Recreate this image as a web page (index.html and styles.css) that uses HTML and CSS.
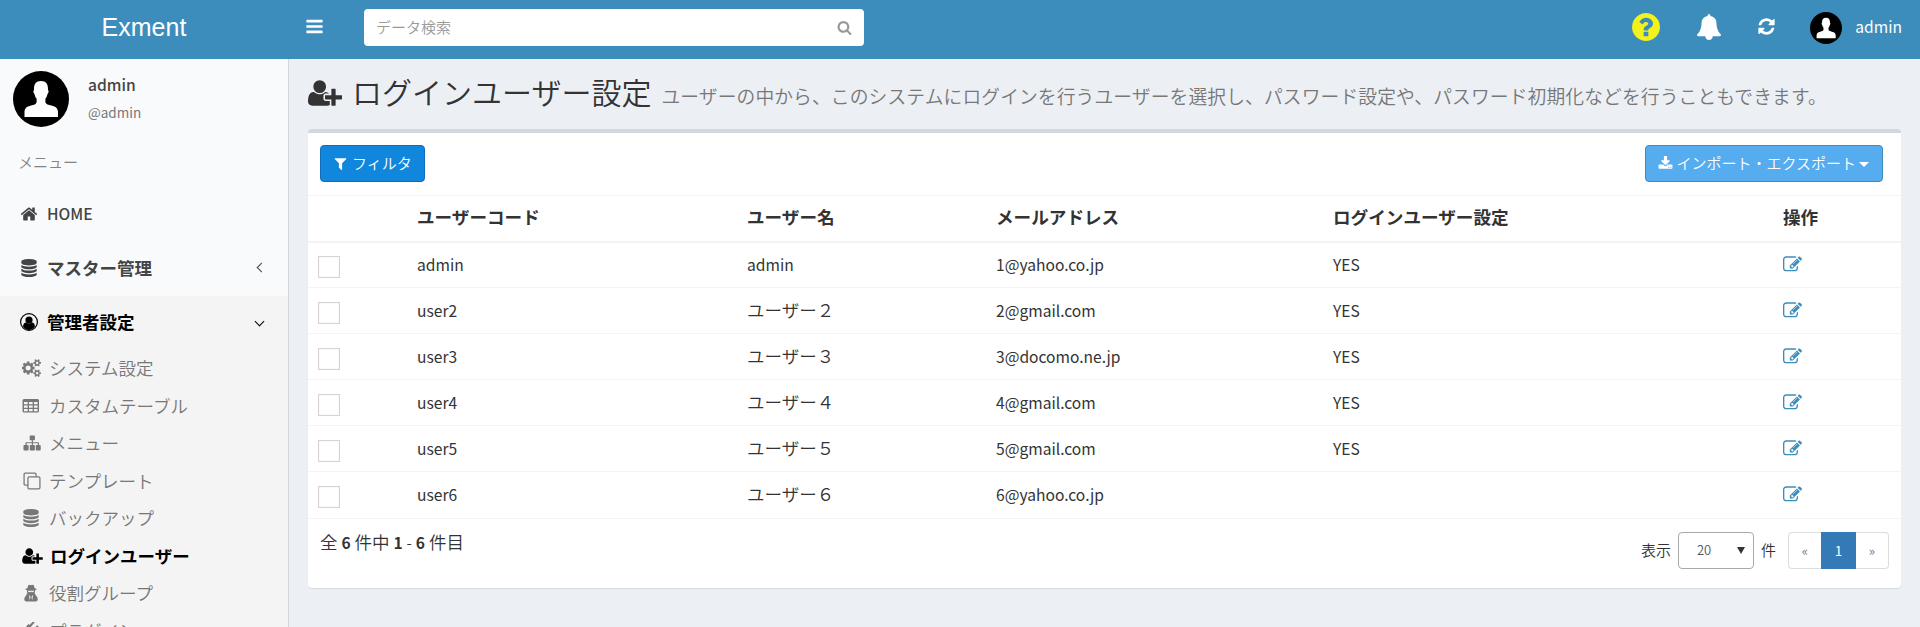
FILE: index.html
```html
<!DOCTYPE html>
<html lang="ja">
<head>
<meta charset="utf-8">
<title>ログインユーザー設定 | Exment</title>
<link rel="stylesheet" href="styles.css">
</head>
<body>
<svg class="sprite" aria-hidden="true">
  <symbol id="bars" viewBox="0 0 1792 1792"><path d="M1664 1344v128q0 26-19 45t-45 19h-1408q-26 0-45-19t-19-45v-128q0-26 19-45t45-19h1408q26 0 45 19t19 45zm0-512v128q0 26-19 45t-45 19h-1408q-26 0-45-19t-19-45v-128q0-26 19-45t45-19h1408q26 0 45 19t19 45zm0-512v128q0 26-19 45t-45 19h-1408q-26 0-45-19t-19-45v-128q0-26 19-45t45-19h1408q26 0 45 19t19 45z"/></symbol>
  <symbol id="search" viewBox="0 0 1792 1792"><path d="M1216 832q0-185-131.500-316.500t-316.500-131.500-316.500 131.500-131.500 316.500 131.500 316.500 316.500 131.500 316.500-131.500 131.500-316.500zm512 832q0 52-38 90t-90 38q-54 0-90-38l-343-342q-179 124-399 124-143 0-273.500-55.500t-225-150-150-225-55.500-273.500 55.500-273.500 150-225 225-150 273.500-55.500 273.500 55.500 225 150 150 225 55.500 273.500q0 220-124 399l343 343q37 37 37 90z"/></symbol>
  <symbol id="filter" viewBox="0 0 1792 1792"><path d="M1595 295q17 41-14 70l-493 493v742q0 42-39 59-13 5-25 5-27 0-45-19l-256-256q-19-19-19-45v-486l-493-493q-31-29-14-70 17-39 59-39h1280q42 0 59 39z"/></symbol>
  <symbol id="home" viewBox="0 0 1792 1792"><path d="M1472 992v480q0 26-19 45t-45 19h-384v-384h-256v384h-384q-26 0-45-19t-19-45v-480q0-1 .5-3t.5-3l575-474 575 474q1 2 1 6zm223-69l-62 74q-8 9-21 11h-3q-13 0-21-7l-692-577-692 577q-12 8-24 7-13-2-21-11l-62-74q-8-10-7-23.500t11-21.500l719-599q32-26 76-26t76 26l244 204v-195q0-14 9-23t23-9h192q14 0 23 9t9 23v408l219 182q10 8 11 21.500t-7 23.500z"/></symbol>
  <symbol id="database" viewBox="0 0 1792 1792"><path d="M896 768q237 0 443-43t325-127v170q0 69-103 128t-280 93.500-385 34.500-385-34.500-280-93.500-103-128v-170q119 84 325 127t443 43zm0 768q237 0 443-43t325-127v170q0 69-103 128t-280 93.500-385 34.500-385-34.500-280-93.500-103-128v-170q119 84 325 127t443 43zm0-384q237 0 443-43t325-127v170q0 69-103 128t-280 93.500-385 34.500-385-34.500-280-93.500-103-128v-170q119 84 325 127t443 43zm0-1152q208 0 385 34.500t280 93.500 103 128v128q0 69-103 128t-280 93.500-385 34.500-385-34.500-280-93.500-103-128v-128q0-69 103-128t280-93.500 385-34.500z"/></symbol>
  <symbol id="user-circle" viewBox="0 0 18 18"><circle cx="9" cy="9" r="8.400" fill="none" stroke="currentColor" stroke-width="1.200"/><circle cx="9" cy="7" r="3.600"/><path d="M3 13.600C3.300 11 4.300 9.600 6 9.600q3 2 6 0c1.700 0 2.700 1.400 3 4Q12.500 17 9 17T3 13.600z"/></symbol>
  <symbol id="cogs" viewBox="0 0 1920 1792"><path d="M832 896q0-106-75-181t-181-75-181 75-75 181 75 181 181 75 181-75 75-181zm768 512q0-52-38-90t-90-38-90 38-38 90q0 53 37.500 90.500t90.500 37.500 90.500-37.500 37.500-90.500zm0-1024q0-52-38-90t-90-38-90 38-38 90q0 53 37.500 90.500t90.500 37.500 90.500-37.500 37.500-90.500zm-384 421v185q0 10-7 19.500t-16 10.500l-155 24q-11 35-32 76 34 48 90 115 7 11 7 20 0 12-7 19-23 30-82.500 89.500t-78.500 59.500q-11 0-21-7l-115-90q-37 19-77 31-11 108-23 155-7 24-30 24h-186q-11 0-20-7.500t-10-17.500l-23-153q-34-10-75-31l-118 89q-7 7-20 7-11 0-21-8-144-133-144-160 0-9 7-19 10-14 41-53t47-61q-23-44-35-82l-152-24q-10-1-17-9.500t-7-19.500v-185q0-10 7-19.500t16-10.500l155-24q11-35 32-76-34-48-90-115-7-11-7-20 0-12 7-20 22-30 82-89t79-59q11 0 21 7l115 90q34-18 77-32 11-108 23-154 7-24 30-24h186q11 0 20 7.500t10 17.500l23 153q34 10 75 31l118-89q8-7 20-7 11 0 21 8 144 133 144 160 0 8-7 19-12 16-42 54t-45 60q23 48 34 82l152 23q10 2 17 10.500t7 19.500zm640 533v140q0 16-149 31-12 27-30 52 51 113 51 138 0 4-4 7-122 71-124 71-8 0-46-47t-52-68q-20 2-30 2t-30-2q-14 21-52 68t-46 47q-2 0-124-71-4-3-4-7 0-25 51-138-18-25-30-52-149-15-149-31v-140q0-16 149-31 13-29 30-52-51-113-51-138 0-4 4-7 4-2 35-20t59-34 30-16q8 0 46 46.500t52 67.500q20-2 30-2t30 2q51-71 92-112l6-2q4 0 124 70 4 3 4 7 0 25-51 138 17 23 30 52 149 15 149 31zm0-1024v140q0 16-149 31-12 27-30 52 51 113 51 138 0 4-4 7-122 71-124 71-8 0-46-47t-52-68q-20 2-30 2t-30-2q-14 21-52 68t-46 47q-2 0-124-71-4-3-4-7 0-25 51-138-18-25-30-52-149-15-149-31v-140q0-16 149-31 13-29 30-52-51-113-51-138 0-4 4-7 4-2 35-20t59-34 30-16q8 0 46 46.500t52 67.500q20-2 30-2t30 2q51-71 92-112l6-2q4 0 124 70 4 3 4 7 0 25-51 138 17 23 30 52 149 15 149 31z"/></symbol>
  <symbol id="table" viewBox="0 0 18 18"><path fill-rule="evenodd" d="M2 2h13.500q1.500 0 1.500 1.500V14q0 1.500-1.500 1.500H2Q.5 15.500.5 14V3.500Q.5 2 2 2zM2 5v2.300h3.700V5zm5 0v2.300h3.700V5zm5 0v2.300h3.600V5zM2 8.600v2.200h3.700V8.600zm5 0v2.200h3.700V8.600zm5 0v2.200h3.600V8.600zM2 12.100v2.200h3.700v-2.200zm5 0v2.200h3.700v-2.200zm5 0v2.200h3.600v-2.200z"/></symbol>
  <symbol id="sitemap" viewBox="0 0 18 18"><path d="M7.300 1.500h4q.6 0 .6.600v3.500q0 .6-.6.600H9.900v2h5.200q.9 0 .9.900v2h1q.7 0 .7.700v3.900q0 .7-.7.700h-3.500q-.7 0-.7-.7v-3.900q0-.7.700-.7h1.300V9.300H9.900v1.800h1.300q.7 0 .7.700v3.900q0 .7-.7.700H7.500q-.7 0-.7-.7v-3.900q0-.7.700-.7h1.300V9.300H3.600v1.800h1.300q.7 0 .7.700v3.900q0 .7-.7.700H1.200q-.7 0-.7-.7v-3.900q0-.7.700-.7h1.200v-2q0-.9.900-.9h5.500v-2H7.300q-.6 0-.6-.6V2.100q0-.6.600-.6z"/></symbol>
  <symbol id="clone" viewBox="0 0 20 20"><g fill="none" stroke="currentColor" stroke-width="1.400"><rect x="5.500" y="5.500" width="13.300" height="13.300" rx="1.200"/><path d="M5.300 14.500H2.400q-1.200 0-1.200-1.200V2.400q0-1.200 1.200-1.200h10.900q1.200 0 1.200 1.200v2.900"/></g></symbol>
  <symbol id="user-plus" viewBox="0 0 2048 1792"><path d="M704 896q-159 0-271.500-112.500t-112.500-271.500 112.500-271.500 271.500-112.500 271.500 112.500 112.500 271.500-112.500 271.500-271.500 112.500zm960 128h352q13 0 22.500 9.500t9.500 22.500v192q0 13-9.500 22.500t-22.500 9.500h-352v352q0 13-9.500 22.500t-22.500 9.500h-192q-13 0-22.500-9.500t-9.500-22.500v-352h-352q-13 0-22.500-9.500t-9.500-22.500v-192q0-13 9.500-22.500t22.500-9.500h352v-352q0-13 9.500-22.500t22.500-9.500h192q13 0 22.500 9.500t9.500 22.500v352zm-736 224q0 52 38 90t90 38h256v238q-68 50-171 50h-874q-121 0-194-69t-73-190q0-53 3.500-103.500t14-109 26.500-108.500 43-97.500 62-81 85.500-53.500 111.500-20q19 0 39 17 79 61 154.500 91.500t164.500 30.500 164.500-30.500 154.500-91.500q20-17 39-17 132 0 217 96h-223q-52 0-90 38t-38 90v192z"/></symbol>
  <symbol id="secret" viewBox="0 0 16 18"><path fill-rule="evenodd" d="M5 2Q5.500.8 6.200.8L8 1.300 9.800.8q.7 0 1.200 1.200l.7 2.300q2 .5 2 .9 0 .5-1.600.8.200 2-.7 3.700l1.300.2-.4 1.200q2.300 1.200 2.500 4.200 0 2.100-1.900 2.100H3.100q-1.900 0-1.900-2.100.2-3 2.500-4.200l-.5-1.200 1.400-.3Q3.700 8 3.900 6q-1.600-.3-1.600-.8 0-.4 2-.9zM5 6.700l.3 1.300 2 .2.700-.7.700.7 2-.2.300-1.300zM6 11l.8 5.400.7-3.300-.5-1zm4 0-1 1.100-.5 1 .7 3.300z"/></symbol>
  <symbol id="plug" viewBox="0 0 18 18"><path d="M16.800 4.700 13 8.500l1 1-1 1q-3.500 3.300-7.200 1.200L2 15.500.6 15.500v-1.400l3.700-3.800Q2.200 6.600 5.500 3l1-1 1 1 3.800-3.800 1.400 1.400-3.700 3.900 2.400 2.400 3.900-3.700z"/></symbol>
  <symbol id="bell" viewBox="0 0 1792 1792"><path d="M1728 1408q0 52-38 90t-90 38h-448q0 106-75 181t-181 75-181-75-75-181h-448q-52 0-90-38t-38-90q50-42 91-88t85-119.500 74.500-158.500 50-206 19.500-260q0-152 117-282.500t307-158.500q-8-19-8-39 0-40 28-68t68-28 68 28 28 68q0 20-8 39 190 28 307 158.500t117 282.500q0 139 19.500 260t50 206 74.500 158.500 85 119.500 91 88z"/></symbol>
  <symbol id="refresh" viewBox="0 0 1792 1792"><path d="M1639 1056q0 5-1 7-64 268-268 434.500t-478 166.500q-146 0-282.500-55t-243.500-157l-129 129q-19 19-45 19t-45-19-19-45v-448q0-26 19-45t45-19h448q26 0 45 19t19 45-19 45l-137 137q71 66 161 102t187 36q134 0 250-65t186-179q11-17 53-117 8-23 30-23h192q13 0 22.500 9.500t9.500 22.500zm25-800v448q0 26-19 45t-45 19h-448q-26 0-45-19t-19-45 19-45l138-138q-148-137-349-137-134 0-250 65t-186 179q-11 17-53 117-8 23-30 23h-199q-13 0-22.500-9.500t-9.500-22.500v-7q65-268 270-434.500t480-166.500q146 0 284 55.500t245 156.500l130-129q19-19 45-19t45 19 19 45z"/></symbol>
  <symbol id="question" viewBox="128 128 1536 1536"><path d="M1024 1376v-192q0-14-9-23t-23-9h-192q-14 0-23 9t-9 23v192q0 14 9 23t23 9h192q14 0 23-9t9-23zm256-672q0-88-55.500-163t-138.500-116-170-41q-243 0-371 213-15 24 8 42l132 100q7 6 19 6 16 0 25-12 53-68 86-92 34-24 86-24 48 0 85.500 26t37.500 59q0 38-20 61t-68 45q-63 28-115.500 86.500t-52.500 125.500v36q0 14 9 23t23 9h192q14 0 23-9t9-23q0-19 21.500-49.500t54.500-49.500q32-18 49-28.500t46-35 44.500-48 28-60.500 12.500-81zm384 192q0 209-103 385.500t-279.500 279.500-385.500 103-385.500-103-279.500-279.500-103-385.500 103-385.500 279.500-279.500 385.500-103 385.500 103 279.500 279.500 103 385.500z"/></symbol>
  <symbol id="download" viewBox="0 0 1792 1792"><path d="M1344 1344q0-26-19-45t-45-19-45 19-19 45 19 45 45 19 45-19 19-45zm256 0q0-26-19-45t-45-19-45 19-19 45 19 45 45 19 45-19 19-45zm128-224v320q0 40-28 68t-68 28h-1472q-40 0-68-28t-28-68v-320q0-40 28-68t68-28h465l135 136q58 56 136 56t136-56l136-136h464q40 0 68 28t28 68zm-325-569q17 41-14 70l-448 448q-18 19-45 19t-45-19l-448-448q-31-29-14-70 17-39 59-39h256v-448q0-26 19-45t45-19h256q26 0 45 19t19 45v448h256q42 0 59 39z"/></symbol>
  <symbol id="edit" viewBox="0 0 1792 1792"><path d="M888 1184l116-116-152-152-116 116v56h96v96h56zm440-720q-16-16-33 1l-350 350q-17 17-1 33t33-1l350-350q17-17 1-33zm80 594v190q0 119-84.500 203.500t-203.500 84.500h-832q-119 0-203.500-84.500t-84.500-203.500v-832q0-119 84.500-203.500t203.500-84.500h832q63 0 117 25 15 7 18 23 3 17-9 29l-49 49q-14 14-32 8-23-6-45-6h-832q-66 0-113 47t-47 113v832q0 66 47 113t113 47h832q66 0 113-47t47-113v-126q0-13 9-22l64-64q15-15 35-7t20 29zm-96-738l288 288-672 672h-288v-288zm444 132l-92 92-288-288 92-92q28-28 68-28t68 28l152 152q28 28 28 68t-28 68z"/></symbol>
  <symbol id="avatar" viewBox="0 0 56 56"><circle cx="28" cy="28" r="28" fill="#000"/><path fill="#fff" d="M28 10c5 0 7.300 3 7 9 1 .4.800 3-.6 4.200-.4 2.400-1.200 3.500-2 4.300v3.700c.5 2 3 2.600 6 3.400 4.500 1.200 6.600 2.600 6.600 7V46H11.500v-4.400c0-4.400 2-5.800 6.500-7 3-.8 5.100-1.400 5.600-3.400v-3.700c-.8-.8-1.600-1.900-2-4.300-1.400-1.200-1.600-3.800-.6-4.200-.3-6 2-9 7-9z"/></symbol>
</svg>

<header class="header">
  <a class="logo">Exment</a>
  <nav class="navbar">
    <svg class="icon toggle"><use href="#bars"/></svg>
    <form class="search"><span>データ検索</span><svg class="icon search-icon"><use href="#search"/></svg></form>
    <div class="nav-right">
      <svg class="icon help"><use href="#question"/></svg>
      <svg class="icon bell"><use href="#bell"/></svg>
      <svg class="icon refresh"><use href="#refresh"/></svg>
      <svg class="nav-avatar"><use href="#avatar"/></svg>
      <span class="latin">admin</span>
    </div>
  </nav>
</header>

<div class="layout">
  <aside class="sidebar">
    <div class="user-panel">
      <svg class="user-avatar"><use href="#avatar"/></svg>
      <div class="user-info"><b>admin</b><span>@admin</span></div>
    </div>
    <div class="menu-title">メニュー</div>
    <a class="menu-item"><svg class="icon"><use href="#home"/></svg><span class="latin">HOME</span></a>
    <a class="menu-item"><svg class="icon db"><use href="#database"/></svg><span>マスター管理</span><i class="arrow left"></i></a>
    <div class="tree">
      <a class="menu-item active"><svg class="icon"><use href="#user-circle"/></svg><span>管理者設定</span><i class="arrow down"></i></a>
      <a class="sub-item"><svg class="icon wide"><use href="#cogs"/></svg><span>システム設定</span></a>
      <a class="sub-item"><svg class="icon"><use href="#table"/></svg><span>カスタムテーブル</span></a>
      <a class="sub-item"><svg class="icon wide"><use href="#sitemap"/></svg><span>メニュー</span></a>
      <a class="sub-item"><svg class="icon wide"><use href="#clone"/></svg><span>テンプレート</span></a>
      <a class="sub-item"><svg class="icon"><use href="#database"/></svg><span>バックアップ</span></a>
      <a class="sub-item active"><svg class="icon plus"><use href="#user-plus"/></svg><span>ログインユーザー</span></a>
      <a class="sub-item"><svg class="icon"><use href="#secret"/></svg><span>役割グループ</span></a>
      <a class="sub-item"><svg class="icon"><use href="#plug"/></svg><span>プラグイン</span></a>
    </div>
  </aside>

  <main class="content">
    <h1 class="page-title"><svg class="icon title-icon"><use href="#user-plus"/></svg><span>ログインユーザー設定</span><small>ユーザーの中から、このシステムにログインを行うユーザーを選択し、パスワード設定や、パスワード初期化などを行うこともできます。</small></h1>
    <section class="box">
      <div class="box-header">
        <button class="btn primary"><svg class="icon"><use href="#filter"/></svg><span>フィルタ</span></button>
        <button class="btn light"><svg class="icon"><use href="#download"/></svg><span>インポート・エクスポート</span><i class="caret"></i></button>
      </div>
      <table class="grid">
        <colgroup><col class="c-check"><col class="c-code"><col class="c-name"><col class="c-mail"><col class="c-login"><col class="c-ops"></colgroup>
        <thead><tr><th></th><th>ユーザーコード</th><th>ユーザー名</th><th>メールアドレス</th><th>ログインユーザー設定</th><th>操作</th></tr></thead>
        <tbody>
          <tr><td><i class="check"></i></td><td>admin</td><td>admin</td><td>1@yahoo.co.jp</td><td>YES</td><td><svg class="icon edit"><use href="#edit"/></svg></td></tr>
          <tr><td><i class="check"></i></td><td>user2</td><td class="jp">ユーザー２</td><td>2@gmail.com</td><td>YES</td><td><svg class="icon edit"><use href="#edit"/></svg></td></tr>
          <tr><td><i class="check"></i></td><td>user3</td><td class="jp">ユーザー３</td><td>3@docomo.ne.jp</td><td>YES</td><td><svg class="icon edit"><use href="#edit"/></svg></td></tr>
          <tr><td><i class="check"></i></td><td>user4</td><td class="jp">ユーザー４</td><td>4@gmail.com</td><td>YES</td><td><svg class="icon edit"><use href="#edit"/></svg></td></tr>
          <tr><td><i class="check"></i></td><td>user5</td><td class="jp">ユーザー５</td><td>5@gmail.com</td><td>YES</td><td><svg class="icon edit"><use href="#edit"/></svg></td></tr>
          <tr><td><i class="check"></i></td><td>user6</td><td class="jp">ユーザー６</td><td>6@yahoo.co.jp</td><td></td><td><svg class="icon edit"><use href="#edit"/></svg></td></tr>
        </tbody>
      </table>
      <div class="box-footer">
        <p class="range">全 <b>6</b> 件中 <b>1</b> <em>-</em> <b>6</b> 件目</p>
        <div class="pager">
          <span>表示</span>
          <div class="select"><span>20</span><i></i></div>
          <span>件</span>
          <div class="pages"><a>«</a><a class="current">1</a><a>»</a></div>
        </div>
      </div>
    </section>
  </main>
</div>
</body>
</html>
```
FILE: styles.css
```css
* { box-sizing: border-box; }

body {
  margin: 0;
  height: 627px;
  overflow: hidden;
  background: #ecf0f5;
  color: #333;
  font: 350 17.5px/1.43 "Noto Sans CJK JP", sans-serif;
}

.sprite { position: absolute; width: 0; height: 0; }
.icon { display: block; flex: none; width: 18px; height: 18px; fill: currentColor; }
.latin { font-size: 15.6px; }

/* Header */
.header { display: flex; height: 59px; background: #3c8dbc; color: #fff; }
.logo {
  width: 288px;
  font: 400 25px/54px "Liberation Sans", Arial, sans-serif;
  text-align: center;
}
.navbar { display: flex; flex: 1; align-items: center; padding: 0 18px 7px 17px; }
.toggle { width: 19px; height: 19px; }
.search {
  display: flex;
  align-items: center;
  justify-content: space-between;
  width: 500px;
  height: 37px;
  margin: 3px 0 0 40px;
  padding: 0 12px 1px;
  border-radius: 4px;
  background: #fff;
  color: #999;
  font-size: 15px;
}
.search-icon { width: 15px; height: 15px; color: #999; }
.nav-right { display: flex; align-items: center; margin-left: auto; font-weight: 400; }
.help { width: 28px; height: 28px; margin: 2px 36px 0 0; color: #f3f31b; }
.bell { width: 26px; height: 26px; margin: 2px 35px 0 0; }
.refresh { width: 19px; height: 19px; margin-right: 34px; }
.nav-avatar { width: 32px; height: 32px; margin: 3px 13px 0 0; }

/* Sidebar */
.layout { display: flex; height: 568px; }
.sidebar {
  width: 289px;
  overflow: hidden;
  border-right: 1px solid #d2d6de;
  background: #f9fafc;
}
.user-panel { display: flex; height: 81px; padding: 12px 13px; }
.user-avatar { width: 56px; height: 56px; }
.user-info { display: flex; flex-direction: column; margin: -1px 0 0 19px; }
.user-info b { color: #444; font-size: 15.6px; font-weight: 500; line-height: 28px; }
.user-info span { color: #777; font-size: 13.5px; font-weight: 400; line-height: 28px; }
.menu-title { height: 48px; padding: 8px 18px; color: #848484; font-size: 15px; line-height: 28px; }
.menu-item {
  display: flex;
  align-items: center;
  height: 54px;
  padding: 0 23px 3px 20px;
  color: #444;
  font-weight: 700;
}
.menu-item .icon { margin-right: 9px; }
.menu-item .latin { font-weight: 500; }
.tree { background: #f4f4f5; }
.tree .active { color: #000; }
.arrow { width: 7px; height: 7px; margin-left: auto; border: solid currentColor; border-width: 0 0 1.500px 1.500px; }
.arrow.left { transform: rotate(45deg); }
.arrow.down { margin-right: 2px; transform: rotate(-45deg); }
.sub-item {
  display: flex;
  align-items: center;
  height: 37.500px;
  padding: 0 0 2px 22px;
  color: #777;
}
.sub-item .icon { margin: 1px 9px 0 0; }
.sub-item .wide { width: 20px; margin-right: 7px; }
.sub-item .plus { width: 21px; margin-right: 7px; }
.sub-item.active { font-weight: 700; }

/* Content */
.content { flex: 1; padding: 0 19px; }
.page-title {
  display: flex;
  align-items: baseline;
  height: 70px;
  margin: 0;
  padding-top: 10px;
  font-size: 30px;
  font-weight: 350;
  line-height: 44px;
  white-space: nowrap;
}
.title-icon { width: 34px; height: 30px; margin-right: 10px; transform: translateY(4px); }
.page-title small { margin-left: 10px; color: #777; font-size: 18.750px; letter-spacing: .12px; }
.box {
  height: 459px;
  border-top: 4px solid #d2d6de;
  border-radius: 4px;
  background: #fff;
  box-shadow: 0 1px 1px rgba(0, 0, 0, .1);
}
.box-header { display: flex; justify-content: space-between; height: 62px; padding: 12px 18px 0 12px; }
.btn {
  display: flex;
  align-items: center;
  height: 37px;
  padding: 0 12px 1px;
  border: 1px solid;
  border-radius: 4px;
  color: #fff;
  font: 350 15px/22px "Noto Sans CJK JP", sans-serif;
}
.btn .icon { width: 15px; height: 15px; }
.primary { border-color: #0d6ebd; background: #1087dd; }
.primary .icon { margin-right: 4px; }
.light { border-color: #3c8dbc; background: #55acee; }
.light .icon { margin-right: 3px; }
.caret { margin: 3px 1px 0 3px; border: 5px solid transparent; border-top-color: #fff; border-bottom: 0; }

.grid { width: 100%; border-collapse: collapse; table-layout: fixed; }
.c-check { width: 99px; }
.c-code { width: 330px; }
.c-name { width: 249px; }
.c-mail { width: 337px; }
.c-login { width: 450px; }
.grid th, .grid td { padding: 0 10px; border-top: 1px solid #f4f4f4; text-align: left; white-space: nowrap; }
.grid th { height: 46px; padding-bottom: 2px; font-size: 17.600px; font-weight: 700; line-height: 24px; }
.grid td { height: 46px; padding-bottom: 1px; font-size: 15.600px; line-height: 24px; font-weight: 400; }
.grid tbody tr:first-child td { border-top-width: 2px; }
.grid td.jp { padding-bottom: 2px; font-size: 17.500px; font-weight: 350; }
.grid td:first-child { padding: 4px 0 0 10px; }
.check { display: block; width: 22px; height: 22px; border: 1px solid #d4d4d4; box-shadow: inset 0 0 1px #ccc; background: #fff; }
.edit { color: #3c8dbc; width: 19px; height: 19px; }

.box-footer {
  display: flex;
  justify-content: space-between;
  padding: 13px 12px 0;
  border-top: 1px solid #f4f4f4;
}
.range { margin: -2px 0 0; font-size: 17.500px; line-height: 24px; }
.range b, .range em { font-size: 15.600px; font-style: normal; }
.range b { font-weight: 700; }
.pager { display: flex; align-items: center; height: 37px; font-size: 15px; }
.select {
  display: flex;
  align-items: center;
  justify-content: space-between;
  width: 76px;
  height: 37px;
  margin: 0 7px;
  padding: 0 8px 0 18px;
  border: 1px solid #a9a9a9;
  border-radius: 4px;
  color: #555;
  font-size: 13px;
}
.select i { border: 4px solid transparent; border-top: 7px solid #333; border-bottom: 0; }
.pages { display: flex; margin-left: 12px; font-size: 13.400px; line-height: 35px; text-align: center; }
.pages a { width: 33px; height: 37px; border: 1px solid #ddd; color: #777; }
.pages a:first-child { border-right: 0; border-radius: 4px 0 0 4px; }
.pages a:last-child { border-left: 0; border-radius: 0 4px 4px 0; }
.pages .current { width: 35px; border-color: #337ab7; background: #337ab7; color: #fff; font-weight: 400; }
```
